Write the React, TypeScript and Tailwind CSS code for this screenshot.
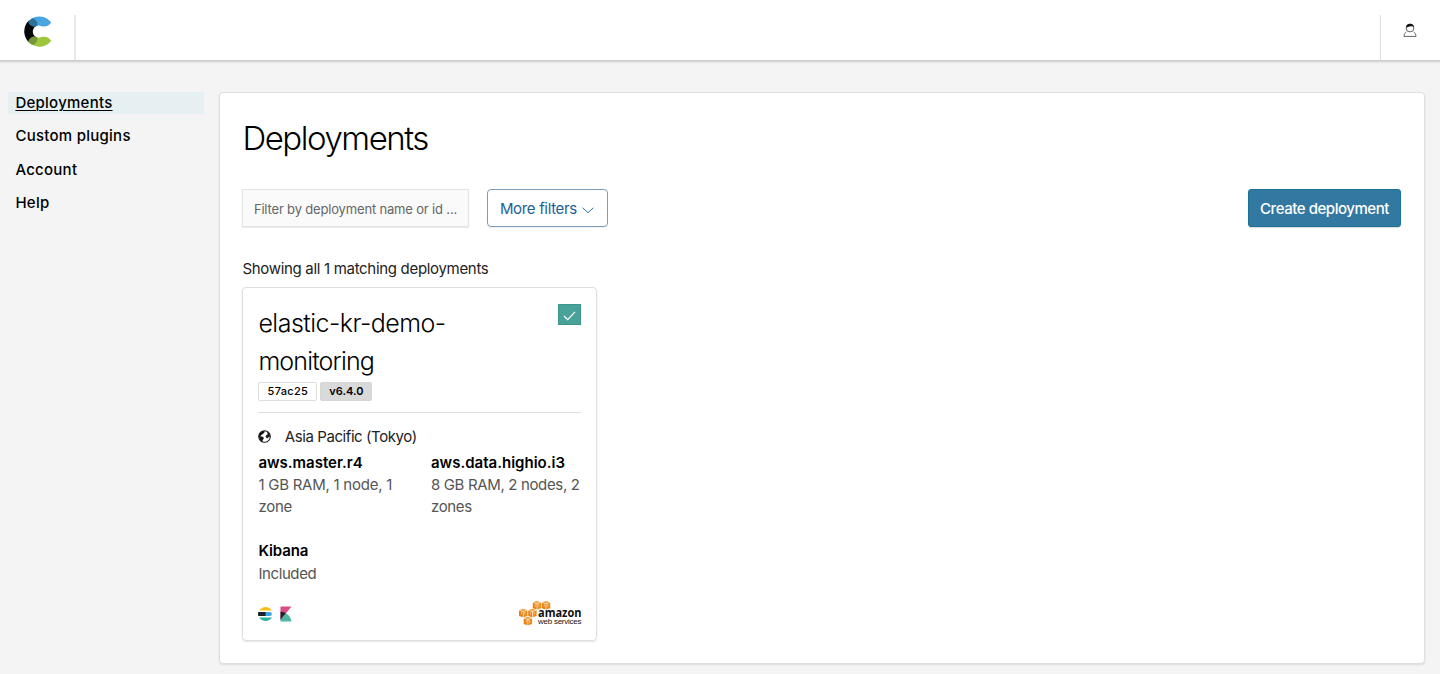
import React from 'react';

function CloudLogo() {
  return (
    <svg width="28" height="31" viewBox="0 0 28 31" className="block">
      <path d="M4.800 4.600A15 15 0 0 0 4.800 26.200L12 21.200A6.500 6.500 0 0 1 12 10Z" fill="#050708" />
      <path d="M27.200 6.600A15 15 0 0 0 7.600 2.600L11.200 10.600A6.400 6.400 0 0 1 17.400 10.200C21 11.200 25 10.300 27.200 6.600Z" fill="#48a5df" />
      <path d="M8.200 2.300A15.400 15.400 0 0 0 4.200 5.400C4.800 8.600 7.800 10.900 11.300 10.600L13.300 9.800C14 6.500 11.800 3.200 8.200 2.300Z" fill="#2e7198" />
      <path d="M27.200 24.800A15 15 0 0 1 7.600 28.600L11.200 20.600A6.400 6.400 0 0 0 17.400 21C21 20 25 21 27.200 24.800Z" fill="#9dc63c" />
      <path d="M8.200 28.900A15.400 15.400 0 0 1 4.200 25.800C4.800 22.600 7.800 20.300 11.300 20.600L13.300 21.400C14 24.700 11.800 28 8.200 28.900Z" fill="#76963a" />
    </svg>
  );
}

function UserIcon() {
  return (
    <svg width="14" height="15" viewBox="0 0 14 15" fill="none" stroke="#666" strokeWidth="1" className="block">
      <circle cx="7" cy="5" r="3.900" />
      <path d="M3 4.800C3.200 2 5 .7 7 .7s3.700 1.200 4 3.300C9.300 2.900 8.200 3.100 6.800 3.600 5.500 4 4.600 3.800 3 4.800Z" fill="#111" stroke="none" />
      <path d="M3.300 8.900C1.900 9.800 1.200 11.100 1 13.400h12c-.2-2.300-.9-3.600-2.300-4.500" />
    </svg>
  );
}

function GlobeIcon() {
  return (
    <svg width="13" height="13" viewBox="0 0 13 13" className="block">
      <circle cx="6.500" cy="6.500" r="5.800" fill="#fff" stroke="#222" strokeWidth="1.100" />
      <path d="M1 5C1.600 2.600 3.700.8 6.600.7l-.2 1.700L4.900 4 3.400 5 2.300 6.400l1.900.2 1.500 1-.1 1.400-1 1.100v2C2.400 11.200.7 8.700 1 5Z" fill="#151515" />
      <path d="M9 1.400c2 .9 3.200 2.800 3.300 5.100l-1.500.5-1.300 1.500-1.200-.7-.8-1.400.9-1.300 1.300-.8Z" fill="#222" />
    </svg>
  );
}

function ElasticsearchLogo() {
  return (
    <svg width="15" height="16" viewBox="0 0 15 16" className="block">
      <path d="M1.200 4.600A7.500 7.500 0 0 1 14 4.600Z" fill="#f4bd19" />
      <path d="M.4 5.900H11.800a2.100 2.100 0 0 1 0 4.200H.4A7.500 7.500 0 0 1 .4 5.900Z" fill="#3ca5e5" />
      <path d="M.4 5.900H7.400a9 9 0 0 1 0 4.200H.4A7.500 7.500 0 0 1 .4 5.900Z" fill="#1d2126" />
      <path d="M1.200 11.400A7.500 7.500 0 0 0 14 11.400Z" fill="#2bb1a3" />
    </svg>
  );
}

function KibanaLogo() {
  return (
    <svg width="12" height="16" viewBox="0 0 12 16" className="block">
      <path d="M.5.500H11.500L.5 14Z" fill="#dc4b86" />
      <path d="M.5 5.800C2.500 5.800 4.300 6.300 5.900 7.300L.5 14Z" fill="#272126" />
      <path d="M5.900 7.300C9 9.100 11 12 11.500 15.500H.5V14Z" fill="#50b5a3" />
    </svg>
  );
}

function Cube({ x, y }: { x: number; y: number }) {
  return (
    <g transform={`translate(${x} ${y})`}>
      <path d="M0 1.300 4.200 0l4.200 1.300L4.200 2.500Z" fill="#f5a544" />
      <path d="M0 1.800 3.900 3v5.500L0 7.200Z" fill="#e58317" />
      <path d="M8.400 1.800 4.500 3v5.500L8.400 7.200Z" fill="#ee8a1a" />
      <path d="M2.500 3.300v2.500M5.900 3.300v2.500" stroke="#fbd3a2" strokeWidth=".8" />
    </g>
  );
}

function AwsLogo() {
  return (
    <svg width="63" height="25" viewBox="0 0 63 25" className="-mr-px block overflow-visible">
      <Cube x={13.800} y={0} />
      <Cube x={22.800} y={0} />
      <Cube x={0} y={7.700} />
      <Cube x={9.200} y={7.700} />
      <Cube x={4.700} y={15.800} />
      <text x="19" y="15.600" textLength="43.500" lengthAdjust="spacingAndGlyphs" fontFamily="Open Sans, sans-serif" fontWeight="700" fontSize="12" fill="#111">amazon</text>
      <text x="19" y="23.200" textLength="43.500" lengthAdjust="spacing" fontFamily="Liberation Sans, sans-serif" fontSize="7.900" fill="#111">web services</text>
    </svg>
  );
}

const links = ['Deployments', 'Custom plugins', 'Account', 'Help'];

export default function App() {
  return (
    <div className="flex h-[674px] w-full flex-col overflow-hidden bg-[#f4f4f4] font-['Inter',sans-serif] text-black">
      <header className="flex h-[60px] shrink-0 items-end justify-between bg-white shadow-[0_1px_2px_1px_rgba(0,0,0,0.17)]">
        <div className="flex h-[45px] w-[76px] items-start border-r-2 border-[#e9e9e9] pl-6 pt-px">
          <CloudLogo />
        </div>
        <div className="flex h-[45px] w-[60px] items-start border-l border-[#dedede] pl-[22px] pt-2">
          <UserIcon />
        </div>
      </header>

      <div className="flex min-h-0 flex-1 pt-8">
        <nav className="flex w-[219px] shrink-0 flex-col gap-[11.400px] pl-2">
          {links.map((label, i) => (
            <a
              key={label}
              className={
                i === 0
                  ? 'block h-[22px] w-[196px] bg-[#e6f0f3] pl-[7.400px] text-[15px] font-medium leading-[22px] tracking-[0.260px] underline decoration-1 underline-offset-2'
                  : 'block h-[22px] w-[196px] pl-[7.400px] text-[15px] font-medium leading-[22px] tracking-[0.260px]'
              }
            >
              {label}
            </a>
          ))}
        </nav>

        <main className="flex h-[572px] w-[1206px] flex-col items-start rounded border border-[#dedede] bg-white pl-[22.400px] pr-[23px] shadow-[0_1px_2px_rgba(0,0,0,0.1)]">
          <h1 className="mt-[21px] h-12 text-[33px] font-[270] leading-[48px] tracking-[-1.460px]">Deployments</h1>
          <div className="mt-[27px] flex h-[38px] w-full">
            <div className="w-[227px] whitespace-nowrap border border-[#e3e3e3] bg-[#fafafa] pl-[10.500px] text-[13px] leading-[38px] tracking-[-0.170px] text-[#666] shadow-[0_1px_1px_rgba(0,0,0,0.07)]">
              Filter by deployment name or id ...
            </div>
            <button className="ml-[18px] flex w-[121px] items-center rounded border border-[#7a9fbd] pl-[11.500px] pt-0.5 text-[15px] tracking-[-0.330px] text-[#1c6194] shadow-[0_1px_1px_rgba(0,0,0,0.07)]">
              <span className="whitespace-nowrap">More filters</span>
              <svg width="12" height="7" viewBox="0 0 12 7" fill="none" stroke="#1c6194" strokeWidth=".9" className="ml-[5px] mt-0.5">
                <path d="M.6.800 6 5.600 11.400.800" />
              </svg>
            </button>
            <button className="ml-auto w-[153px] whitespace-nowrap rounded-[3px] border border-[#1b7199] bg-[#3378a1] text-center text-[15px] font-medium leading-[37px] tracking-[-0.450px] text-white shadow-[0_1px_1px_rgba(0,0,0,0.15)]">
              Create deployment
            </button>
          </div>
          <p className="mt-[30px] h-6 text-[15px] leading-6 tracking-[-0.310px] text-[#222]">Showing all 1 matching deployments</p>

          <section className="mt-[6px] flex h-[354px] w-[355px] shrink-0 flex-col rounded border border-[#dedede] px-[15px] shadow-[0_1px_2px_rgba(0,0,0,0.1)]">
            <div className="flex justify-between pt-4">
              <h2 className="w-[200px] text-[25px] font-[270] leading-[38px] tracking-[-0.520px]">
                elastic-kr-demo-
                <br />
                <span className="tracking-[-0.850px]">monitoring</span>
              </h2>
              <span className="flex h-[21px] w-[23px] items-center justify-center border border-[#3d958b] bg-[#48a299]">
                <svg width="13" height="10" viewBox="0 0 13 10" fill="none" stroke="#fff" strokeWidth="1.200" className="mt-0.5">
                  <path d="M1 5 4.700 8.600 12 .900" />
                </svg>
              </span>
            </div>
            <div className="mt-0.5 flex gap-[3px] text-center text-[11px] leading-[17px]">
              <span className="h-[19px] w-[59px] rounded-[2px] border border-[#dedede] font-medium tracking-[0.300px]">57ac25</span>
              <span className="h-[19px] w-[52px] rounded-[2px] border border-[#d6d6d6] bg-[#d9d9d9] font-semibold">v6.4.0</span>
            </div>
            <hr className="mt-[10.500px] border-[#dedede]" />
            <div className="mt-3 flex h-6 items-center text-[15px]">
              <GlobeIcon />
              <span className="ml-[13.400px] pt-px tracking-[-0.420px] text-[#222]">Asia Pacific (Tokyo)</span>
            </div>
            <div className="mt-[3px] grid grid-cols-[172.600px_150px] text-[15px] leading-[22.200px]">
              <div>
                <h3 className="font-semibold">aws.master.r4</h3>
                <p className="tracking-[-0.250px] text-[#555]">1 GB RAM, 1 node, 1<br />zone</p>
              </div>
              <div className="whitespace-nowrap">
                <h3 className="font-semibold">aws.data.highio.i3</h3>
                <p className="tracking-[-0.350px] text-[#555]">8 GB RAM, 2 nodes, 2<br />zones</p>
              </div>
              <div className="mt-[22.200px]">
                <h3 className="font-semibold tracking-[-0.100px]">Kibana</h3>
                <p className="tracking-[-0.400px] text-[#555]">Included</p>
              </div>
            </div>
            <div className="mt-[16px] flex items-center justify-between">
              <div className="flex gap-[7px] pt-0.5">
                <ElasticsearchLogo />
                <KibanaLogo />
              </div>
              <AwsLogo />
            </div>
          </section>
        </main>
      </div>
    </div>
  );
}
